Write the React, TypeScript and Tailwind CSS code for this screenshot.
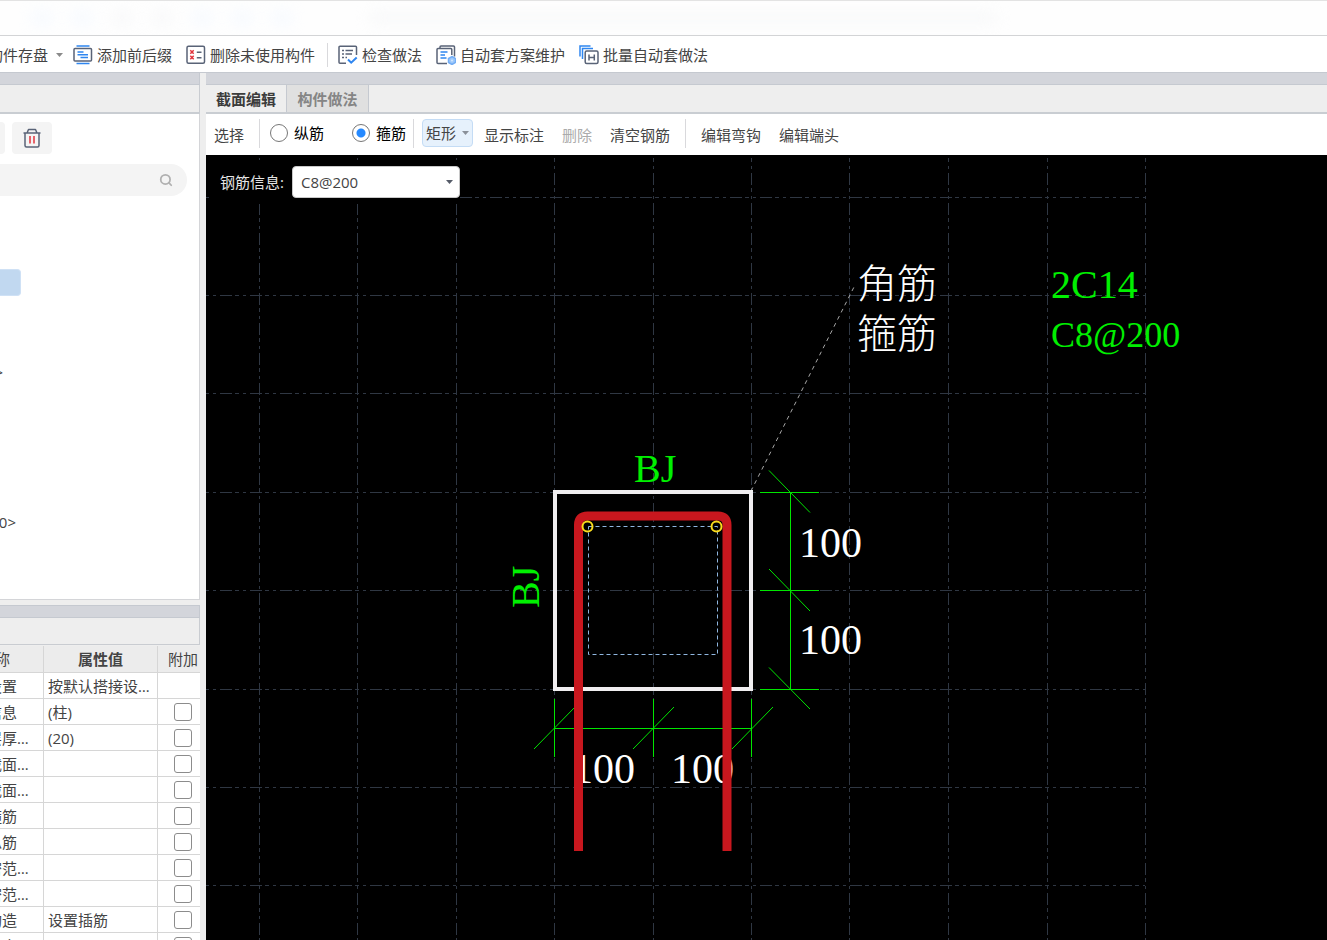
import React from "react";
import { Search } from "lucide-react";

const GRID_X = [53, 151, 250, 348, 447, 545, 643, 742, 841, 939];
const GRID_Y = [42, 140, 238, 337, 435, 534, 632, 730];

type PropertyRow = { name: string; value?: string; extra?: boolean };

const properties: PropertyRow[] = [
  { name: "搭接设置", value: "按默认搭接设置计算", extra: false },
  { name: "汇总信息", value: "(柱)" },
  { name: "保护层厚度(mm)", value: "(20)" },
  { name: "芯柱截面宽(mm)" },
  { name: "芯柱截面高(mm)" },
  { name: "芯柱箍筋" },
  { name: "芯柱纵筋" },
  { name: "上加密范围(mm)" },
  { name: "下加密范围(mm)" },
  { name: "插筋构造", value: "设置插筋" },
  { name: "插筋信息" },
];

const iconProps = {
  width: 20,
  height: 20,
  viewBox: "0 0 20 20",
  fill: "none",
  strokeWidth: 1.5,
  "aria-hidden": true,
};

const PrefixIcon = () => (
  <svg {...iconProps}>
    <path d="M3.5 1h13M3.5 18.5h13" stroke="#2f86f0" />
    <rect x="1" y="3.5" width="17.5" height="12.5" rx="1" stroke="#596377" />
    <path d="M4.5 7h6M4.5 9.8h10.5M7.5 12.5h7.5" stroke="#2f86f0" />
  </svg>
);

const UnusedIcon = () => (
  <svg {...iconProps}>
    <rect x="1" y="1.2" width="17.5" height="17" rx="1.5" stroke="#596377" />
    <path
      d="M4.3 5.3l3.4 3.4M7.7 5.3L4.3 8.7M4.3 10.8l3.4 3.4M7.7 10.8l-3.4 3.4"
      stroke="#e2333c"
    />
    <path d="M10.8 7.2h4.7M10.8 12.8h4.7" stroke="#596377" />
  </svg>
);

const CheckIcon = () => (
  <svg {...iconProps}>
    <path d="M18.5 10V2.2a1 1 0 0 0-1-1H2a1 1 0 0 0-1 1v15a1 1 0 0 0 1 1h6" stroke="#596377" />
    <path d="M4 5.5h2M7.5 5.5H15M4 9h2M7.5 9H14M4 12.5h2M7.5 12.5H9" stroke="#596377" />
    <path d="M10 14.5l3.2 3.2 5.5-5.2" stroke="#2f86f0" strokeWidth="2" />
  </svg>
);

const SchemeIcon = () => (
  <svg {...iconProps}>
    <path d="M4 3V2a1 1 0 0 1 1-1h12.5a1 1 0 0 1 1 1v9.5" stroke="#596377" />
    <path d="M15.8 10V4.5a1 1 0 0 0-1-1H2a1 1 0 0 0-1 1v13a1 1 0 0 0 1 1h9" stroke="#596377" />
    <path d="M4.5 7h7M4.5 10H9M4.5 13h6" stroke="#2f86f0" />
    <path d="M16 11.5l3.5 2v4l-3.5 2-3.5-2v-4z" fill="#9cc8fb" stroke="#72adf5" />
    <circle cx="16" cy="15.5" r="1" fill="#d5e8fd" />
  </svg>
);

const BatchIcon = () => (
  <svg {...iconProps}>
    <path d="M1 11.5V1h10.5M3.5 14V3.5H14" stroke="#2f86f0" />
    <rect x="6.2" y="6" width="12.8" height="12.5" rx="1.5" stroke="#596377" />
    <path d="M10 9.5v6M15.3 9.5v6M10 12.5h5.3" stroke="#596377" />
  </svg>
);

const TrashIcon = () => (
  <svg {...iconProps}>
    <path d="M1.5 5h17M5 5l1.5-3.500h7L15 5" stroke="#596377" strokeLinejoin="round" />
    <path d="M3 5v12.500a1.500 1.500 0 0 0 1.500 1.500h11a1.500 1.500 0 0 0 1.500-1.500V5" stroke="#596377" />
    <path d="M8 8v7.500M12 8v7.500" stroke="#e2333c" />
  </svg>
);

const Caret = ({ className = "" }: { className?: string }) => (
  <svg width="7" height="4" viewBox="0 0 7 4" className={className} aria-hidden>
    <path d="M0 0h7L3.5 4z" fill="currentColor" />
  </svg>
);

const ToolButton = ({ icon, label }: { icon: React.ReactNode; label: string }) => (
  <button className="flex shrink-0 items-center gap-1">
    {icon}
    <span>{label}</span>
  </button>
);

const Divider = ({ className = "" }: { className?: string }) => (
  <div className={`w-px shrink-0 bg-[#d9d9dc] ${className}`} />
);

const TitleBar = () => (
  <div className="flex h-9 shrink-0 items-center gap-5 overflow-hidden border-y border-b-[#d3d4d6] border-t-[#e3e3e3] bg-[#fefefe] pl-8">
    {["bg-blue-50", "bg-blue-50", "bg-gray-100", "bg-gray-100", "bg-blue-50", "bg-blue-50", "bg-blue-50"].map(
      (tone, i) => (
        <div key={i} className={`h-4 w-5 shrink-0 rounded-full opacity-60 blur-sm ${tone}`} />
      )
    )}
    <div className="ml-14 h-3 w-[630px] rounded-full bg-gray-100 opacity-60 blur-sm" />
  </div>
);

const MainToolbar = () => (
  <div className="flex h-9 shrink-0 items-center overflow-hidden bg-white pt-0.5">
    <button className="-ml-3 mr-2.5 flex shrink-0 items-center gap-2">
      构件存盘
      <Caret className="text-[#8a8a8a]" />
    </button>
    <div className="flex items-center gap-3.5">
      <ToolButton icon={<PrefixIcon />} label="添加前后缀" />
      <ToolButton icon={<UnusedIcon />} label="删除未使用构件" />
    </div>
    <Divider className="ml-3 mr-2.5 h-6" />
    <div className="flex items-center gap-3.5">
      <ToolButton icon={<CheckIcon />} label="检查做法" />
      <ToolButton icon={<SchemeIcon />} label="自动套方案维护" />
      <ToolButton icon={<BatchIcon />} label="批量自动套做法" />
    </div>
  </div>
);

const ComponentTree = () => (
  <div className="flex h-[486px] shrink-0 flex-col border-b border-r border-[#d4d5d8] bg-white pt-2">
    <div className="flex gap-[7px]">
      <div className="h-8 w-[5px] rounded-r bg-[#f4f4f4]" />
      <button
        aria-label="删除"
        className="flex h-8 w-10 items-center justify-center rounded bg-[#f4f4f4]"
      >
        <TrashIcon />
      </button>
    </div>
    <label className="mr-3 mt-2.5 flex h-8 items-center rounded-r-full bg-[#f4f4f4] pr-3.5">
      <input aria-label="搜索" className="min-w-0 flex-1 bg-transparent px-2 outline-none" />
      <Search size={14} strokeWidth={3} className="text-[#b0b0b0]" />
    </label>
    <ul className="mt-[71px] w-[21px] overflow-hidden whitespace-nowrap leading-[30px]">
      <li className="flex h-[30px] items-center">
        <div className="h-[27px] w-full rounded-r border border-l-0 border-[#cfe1f5] bg-[#c1d8f0]" />
      </li>
      <li className="h-[30px]" />
      <li className="h-[30px]" />
      <li className="flex h-[30px] justify-end pr-[18px]">&gt;</li>
      <li className="h-[30px]" />
      <li className="h-[30px]" />
      <li className="h-[30px]" />
      <li className="h-[30px]" />
      <li className="flex h-[30px] justify-end pr-[5px]">&lt;0&gt;</li>
    </ul>
  </div>
);

const PropertyTable = () => (
  <div className="flex min-h-0 flex-1 justify-end overflow-hidden">
    <table className="h-fit w-[283px] shrink-0 table-fixed border-separate border-spacing-0">
      <thead>
        <tr className="h-[27px] bg-[#ececec]">
          <th className="w-[127px] border-b border-r border-[#d6d6d6] p-0 font-normal">属性名称</th>
          <th className="w-[114px] border-b border-r border-[#d6d6d6] p-0 font-bold">属性值</th>
          <th className="border-b border-[#d6d6d6] p-0 pl-2 font-normal">附加</th>
        </tr>
      </thead>
      <tbody>
        {properties.map((row) => (
          <tr key={row.name} className="h-[26px] bg-white">
            <td className="truncate border-b border-r border-[#d6d6d6] py-0 pl-10 pr-1">
              {row.name}
            </td>
            <td className="truncate border-b border-r border-[#d6d6d6] px-1 py-0">{row.value}</td>
            <td className="border-b border-[#d6d6d6] p-0 pl-4">
              {row.extra !== false && (
                <input
                  type="checkbox"
                  aria-label={`${row.name} 附加`}
                  className="block size-[18px] appearance-none rounded-[3px] border border-[#8c8c8c] bg-white"
                />
              )}
            </td>
          </tr>
        ))}
      </tbody>
    </table>
  </div>
);

const Sidebar = () => (
  <aside className="flex w-[200px] shrink-0 flex-col">
    <div className="h-3 shrink-0 border-b border-r border-[#c5c9d0] bg-[#d3d5db]" />
    <div className="h-[27px] shrink-0 border-r border-[#c9ccd1] bg-[#eeeeee]" />
    <div className="h-0.5 shrink-0 bg-[#c9cdd2]" />
    <ComponentTree />
    <div className="mt-[5px] h-[13px] shrink-0 border border-l-0 border-[#c5c9d0] bg-[#d3d5db]" />
    <div className="mb-px h-[27px] shrink-0 border-b border-r border-[#c9ccd1] bg-[#eeeeee]" />
    <PropertyTable />
  </aside>
);

const RadioOption = ({ label, checked }: { label: string; checked?: boolean }) => (
  <label className="flex shrink-0 items-center gap-1.5 text-black">
    <input
      type="radio"
      name="rebar"
      defaultChecked={checked}
      className="size-[18px] appearance-none rounded-full border border-[#777] bg-white checked:bg-[radial-gradient(circle,#2589ff_4px,#fff_5px)]"
    />
    {label}
  </label>
);

const EditorToolbar = () => (
  <div className="flex h-[41px] shrink-0 items-center overflow-hidden bg-white pb-[3px] pl-2">
    <button className="mt-1 shrink-0">选择</button>
    <Divider className="ml-[15px] mr-2.5 h-[29px]" />
    <div className="flex gap-7">
      <RadioOption label="纵筋" />
      <RadioOption label="箍筋" checked />
    </div>
    <Divider className="ml-[7px] mr-2 h-[29px]" />
    <button className="flex h-7 w-[51px] shrink-0 items-center justify-between rounded border border-[#c4dcf5] bg-[#e6f1fc] px-[3px]">
      矩形
      <Caret className="text-[#8a9099]" />
    </button>
    <div className="ml-[11px] mt-1 flex shrink-0 gap-[18px]">
      <button>显示标注</button>
      <button disabled className="text-[#ababab]">删除</button>
      <button>清空钢筋</button>
    </div>
    <Divider className="mx-[15px] h-[29px]" />
    <div className="mt-1 flex shrink-0 gap-[18px]">
      <button>编辑弯钩</button>
      <button>编辑端头</button>
    </div>
  </div>
);

const SectionDrawing = () => (
  <svg className="block h-full w-full" role="img" aria-label="截面">
    {/* grid */}
    <g stroke="#2f3743" strokeWidth="1" strokeDasharray="12 3 4 4 3 4" shapeRendering="crispEdges">
      {GRID_X.map((x) => (
        <line key={x} x1={x + 0.5} x2={x + 0.5} y1="0" y2="100%" strokeDashoffset="12" />
      ))}
      {GRID_Y.map((y) => (
        <line key={y} x1="0" x2="939" y1={y + 0.5} y2={y + 0.5} strokeDashoffset="16" />
      ))}
    </g>

    {/* dimensions */}
    <g stroke="#00e600" strokeWidth="1">
      <path
        d="M584.5 337V534M554 337.5h59M554 435.5h59M554 534.5h59M348 573.5h197M348.5 544v58M447.5 544v58M545.5 544v58"
        shapeRendering="crispEdges"
      />
      <path d="M563 315.5l41 42M563 414l41 42M563 512.5l41 41.5" />
      <path d="M328 594l41-42M427 594l41-42M526 594l41-42" />
    </g>
    <path d="M545 336L648 132" stroke="#a8a8a8" strokeDasharray="4 4" />

    <g fill="#fff" fontSize="42" fontFamily='"Liberation Serif", serif'>
      <text x="593" y="402">100</text>
      <text x="593" y="499">100</text>
      <text x="366" y="628">100</text>
      <text x="465" y="628">100</text>
    </g>
    <g fill="#fff" fontSize="40" fontWeight="300" fontFamily='"Noto Sans CJK SC", sans-serif'>
      <text x="651" y="143">角筋</text>
      <text x="651" y="193">箍筋</text>
    </g>
    <g fill="#00f000" fontSize="40" fontFamily='"Liberation Serif", serif'>
      <text x="428" y="327">BJ</text>
      <text transform="translate(333 453) rotate(-90)">BJ</text>
      <text x="845" y="143">2C14</text>
      <text x="845" y="192" fontSize="36">C8@200</text>
    </g>

    {/* section outline and stirrup */}
    <rect x="349" y="337" width="196" height="197" fill="none" stroke="#f0eef0" strokeWidth="4" />
    <path
      d="M372.5 696V370q0-9 9-9H512q9 0 9 9V696"
      fill="none"
      stroke="#c8171e"
      strokeWidth="9"
    />
    <rect x="382.5" y="371.5" width="129" height="128" fill="none" stroke="#8fb6e0" strokeDasharray="4 3" />
    <g fill="none" stroke="#fbdc1c" strokeWidth="2">
      <circle cx="381.5" cy="371.5" r="5" />
      <circle cx="510.5" cy="371.5" r="5" />
    </g>
  </svg>
);

const Editor = () => (
  <main className="flex min-w-0 flex-1 flex-col">
    <div className="h-3 shrink-0 border-b border-[#c5c9d0] bg-[#d3d5db]" />
    <div className="flex h-[27px] shrink-0 font-bold">
      <button className="w-[81px] border-r border-[#c5c9d0] text-[#3c3c3c]">截面编辑</button>
      <button className="w-[82px] border-r border-[#c5c9d0] bg-[#e0e0e0] text-[#858585]">构件做法</button>
    </div>
    <div className="h-0.5 shrink-0 bg-[#c9cdd2]" />
    <EditorToolbar />
    <div className="relative min-h-0 flex-1 overflow-hidden bg-black">
      <SectionDrawing />
      {/* floating rebar input */}
      <div className="absolute left-[3px] top-[5px] flex h-11 w-[251px] items-center gap-2 bg-black pl-[11px]">
        <label htmlFor="rebar-info" className="shrink-0 text-[#e4e4e4]">
          钢筋信息:
        </label>
        <div className="relative flex-1">
          <select
            id="rebar-info"
            className="h-8 w-full appearance-none rounded border border-[#c8c8c8] bg-white px-2 text-[#444]"
          >
            <option>C8@200</option>
          </select>
          <Caret className="pointer-events-none absolute right-[7px] top-3.5 text-[#555b68]" />
        </div>
      </div>
    </div>
  </main>
);

const App = () => {
  return (
    <div className="flex h-screen flex-col overflow-hidden bg-[#eeeeee] font-['Open_Sans','Noto_Sans_CJK_SC',sans-serif] text-[15px] leading-5 text-[#444]">
      <TitleBar />
      <MainToolbar />
      <div className="flex min-h-0 flex-1 gap-1.5 border-t border-[#c5c9d0]">
        <Sidebar />
        <Editor />
      </div>
    </div>
  );
};

export default App;
